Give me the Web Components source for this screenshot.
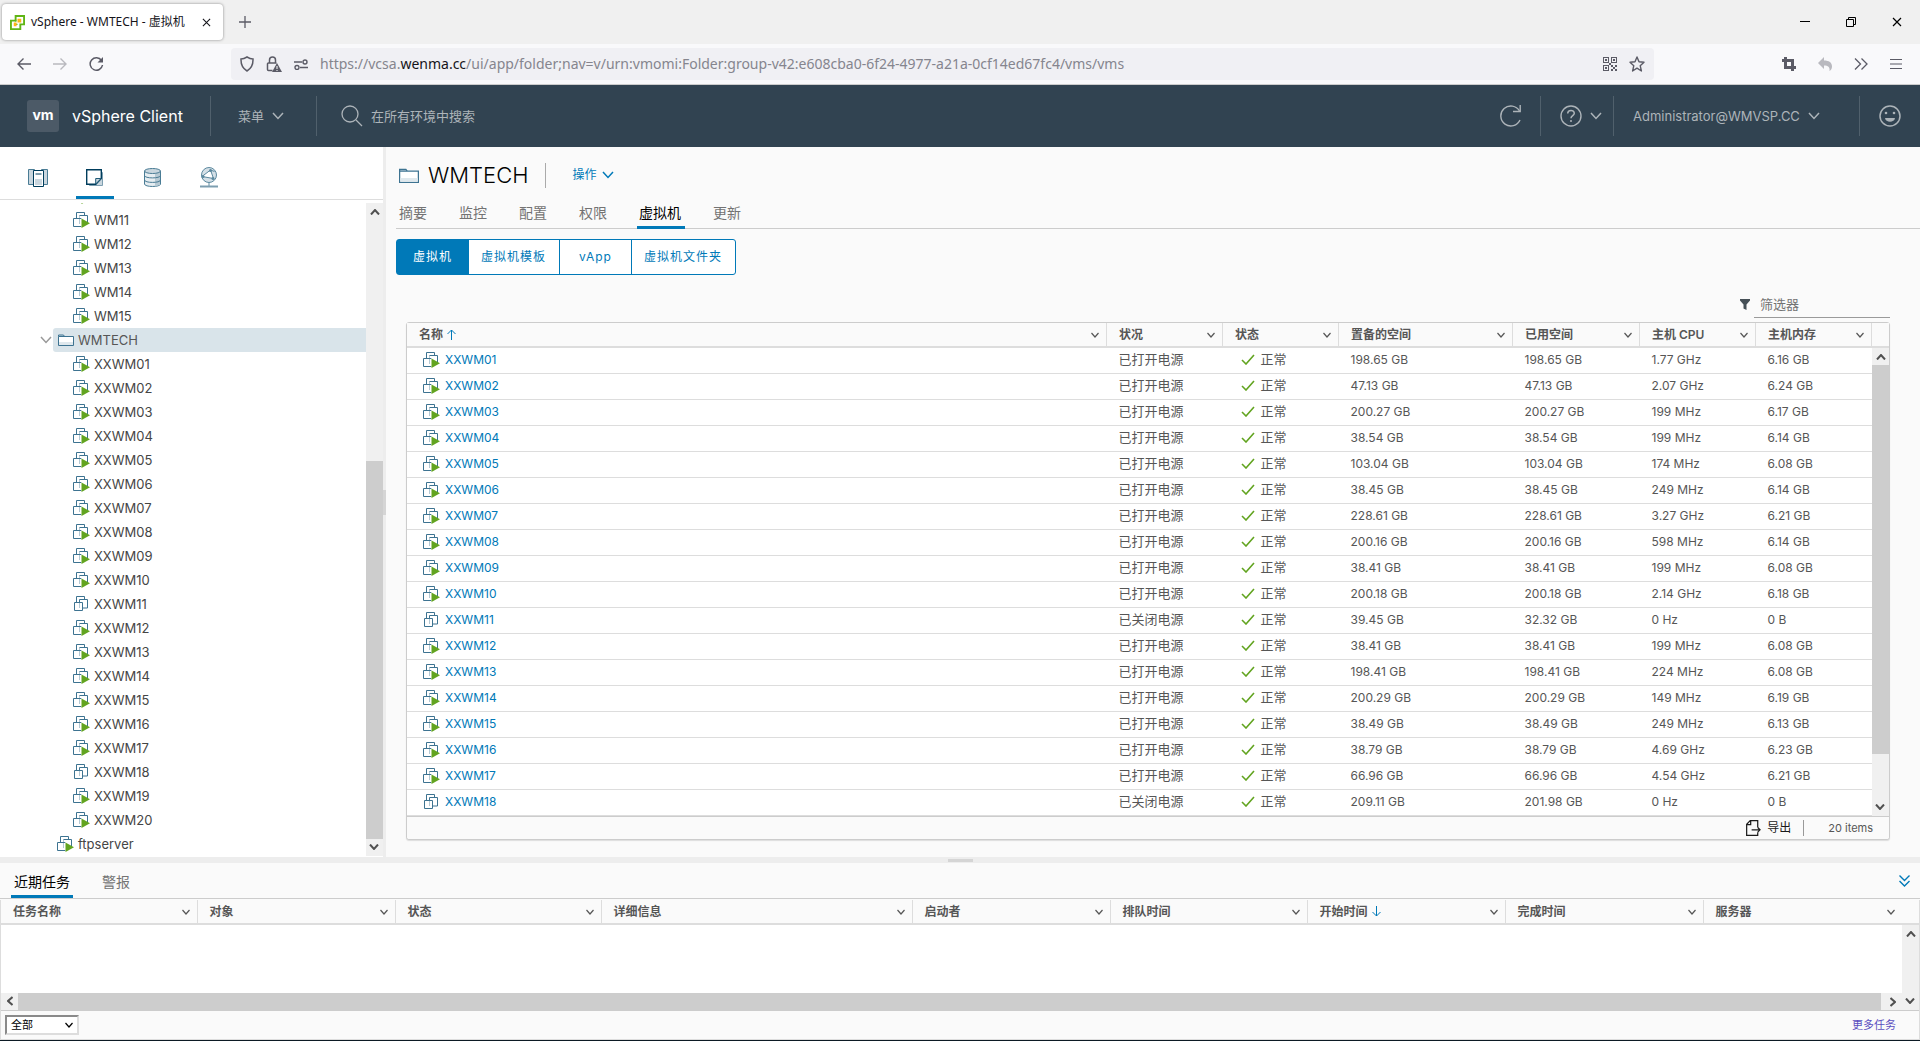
<!DOCTYPE html>
<html lang="zh-CN">
<head>
<meta charset="utf-8">
<title>vSphere - WMTECH - 虚拟机</title>
<style>
  html, body {
    height: 100%;
    margin: 0;
  }
  body {
    display: flex;
    flex-direction: column;
    overflow: hidden;
    background: #fafafa;
    color: #565656;
    font: 12px/24px Inter, "Noto Sans CJK SC", sans-serif;
    --blue: #0079b8;
    --line: #ddd;
    --header: #314351;
  }
</style>
</head>
<body>
  <browser-chrome></browser-chrome>
  <app-header></app-header>
  <app-workspace>
    <nav-tree slot="nav"></nav-tree>
    <vm-view></vm-view>
    <task-panel slot="tasks"></task-panel>
  </app-workspace>

<script>
/*
 * Base class: clones the element's template into an open shadow root
 */
class BaseElement extends HTMLElement {
  constructor() {
    super();
    this.attachShadow({ mode: "open" });
    let t = document.createElement("template");
    t.innerHTML = BaseElement.reset + this.template;
    this.shadowRoot.append(t.content.cloneNode(true));
  }
}

BaseElement.reset = `
  <style>
    *, :host { box-sizing: border-box; }
    button, input, select { font: inherit; color: inherit; background: none; border: 0; margin: 0; padding: 0; }
    button { display: inline-flex; align-items: center; text-align: left; white-space: nowrap; }
    a { color: inherit; text-decoration: none; }
    ul { list-style: none; margin: 0; padding: 0; }
    table { border-collapse: collapse; table-layout: fixed; width: 100%; }
  </style>
`;

/*
 * Icons: [width, height, markup]
 */
const ICONS = {
  chevron: [12, 8, `<path d="M1 1l5 5.500 5-5.500" fill="none" stroke="currentColor" stroke-width="1.500"/>`],
  caret: [8, 6, `<path d="M.5 1l3.500 4 3.500-4" fill="none" stroke="currentColor" stroke-width="1.200"/>`],
  arrow: [10, 6, `<path d="M1 5.500l4-4.500 4 4.500" fill="none" stroke="#505050" stroke-width="2"/>`],
  brand: [16, 16, `<path d="M6 1h9v9h-4v5H1V6h5z" fill="#fff" stroke="#60b515" stroke-width="2"/><path d="M6 5v5h5" fill="none" stroke="#60b515" stroke-width="1.500" stroke-dasharray="2 3"/><path d="M8 4h4v4H8zM4 8h3v4H4z" fill="#fdb515"/>`],
  close: [10, 10, `<path d="M1 1l8 8M9 1L1 9" stroke="currentColor" stroke-width="1.200"/>`],
  plus: [12, 12, `<path d="M6 0v12M0 6h12" stroke="currentColor" stroke-width="1.300"/>`],
  back: [14, 12, `<path d="M14 6H1M6.500.5L1 6l5.500 5.500" fill="none" stroke="currentColor" stroke-width="1.400"/>`],
  forward: [14, 12, `<path d="M0 6h13M7.500.5L13 6l-5.500 5.500" fill="none" stroke="currentColor" stroke-width="1.400"/>`],
  reload: [15, 14, `<path d="M12.500 3.500A6.200 6.200 0 1 0 13.500 8" fill="none" stroke="currentColor" stroke-width="1.500"/><path d="M14 0v5.500H8.500z" fill="currentColor"/>`],
  shield: [14, 16, `<path d="M7 1c2 1.300 4 2 6 2 .2 5-1.500 9.500-6 12C2.500 12.500.8 8 1 3c2 0 4-.7 6-2z" fill="none" stroke="currentColor" stroke-width="1.500"/>`],
  lock: [16, 16, `<path d="M3.500 7V4a3 3 0 0 1 6 0v3M6.500 14.500H2.500a1 1 0 0 1-1-1V8a1 1 0 0 1 1-1h8" fill="none" stroke="currentColor" stroke-width="1.500"/><path d="M11 7l5 9H6z" fill="currentColor"/><path d="M11 10v3m0 1v1" stroke="#fff"/>`],
  perms: [14, 11, `<g fill="none" stroke="currentColor" stroke-width="1.400"><path d="M0 3h8M6 8.500h8"/><circle cx="11" cy="3" r="2"/><circle cx="3" cy="8.500" r="2"/></g>`],
  qr: [14, 14, `<path fill="currentColor" fill-rule="evenodd" d="M0 0h6v6H0zm1 1v4h4V1zm1 1h2v2H2zM8 0h6v6H8zm1 1v4h4V1zm1 1h2v2h-2zM0 8h6v6H0zm1 1v4h4V9zm1 1h2v2H2zM8 8h2v2H8zM10 10h2v2h-2zM12 8h2v2h-2zM12 12h2v2h-2zM8 12h2v2H8zM6 6h2v2H6z"/>`],
  star: [16, 16, `<path d="M8 1l2 4.800 5 .5-3.800 3.400L12.400 15 8 12.200 3.600 15l1.200-5.300L1 6.300l5-.5z" fill="none" stroke="currentColor" stroke-width="1.400" stroke-linejoin="round"/>`],
  crop: [14, 14, `<path d="M3.500 0v10.500H14M0 3.500h10.500V14" fill="none" stroke="currentColor" stroke-width="3"/>`],
  undo: [14, 14, `<path d="M6 0v3.500c5 0 8 2 8 6 0 2-1 3.500-2.500 4.500.6-4-1.500-5.500-5.500-5.500V12L0 6z" fill="currentColor"/>`],
  more: [14, 12, `<path d="M1 .5L6.500 6 1 11.500M7.500.5L13 6l-5.500 5.500" fill="none" stroke="currentColor" stroke-width="1.300"/>`],
  menu: [12, 10, `<path d="M0 .5h12M0 5h12M0 9.500h12" stroke="currentColor" stroke-width="1.200"/>`],
  min: [10, 10, `<path d="M0 4.500h10" stroke="currentColor"/>`],
  restore: [10, 10, `<path d="M.5 2.500h7v7h-7zM2.500 2.500v-2h7v7h-2" fill="none" stroke="currentColor"/>`],
  search: [22, 22, `<circle cx="9" cy="9" r="8" fill="none" stroke="currentColor" stroke-width="1.300"/><path d="M15 15l6 6" stroke="currentColor" stroke-width="1.300"/>`],
  refresh: [22, 22, `<path d="M20.500 6A10 10 0 1 0 21 15" fill="none" stroke="currentColor" stroke-width="1.400"/><path d="M21.200 0v6.500H14" fill="none" stroke="currentColor" stroke-width="1.400"/>`],
  help: [22, 22, `<circle cx="11" cy="11" r="10" fill="none" stroke="currentColor" stroke-width="1.400"/><path d="M7.700 8.500c0-4 6.600-4 6.600-.3 0 2.300-3.300 2.500-3.300 5M11 15v2" fill="none" stroke="currentColor" stroke-width="1.500"/>`],
  smile: [22, 22, `<circle cx="11" cy="11" r="10" fill="none" stroke="currentColor" stroke-width="1.500"/><circle cx="7" cy="8" r="1.300" fill="currentColor"/><circle cx="15" cy="8" r="1.300" fill="currentColor"/><path d="M6 13h10c-.5 5-9.500 5-10 0z" fill="currentColor"/>`],
  hosts: [20, 19, `<g stroke="#4a7c95"><path d="M.5 1.500h6v15h-6z" fill="#c9d6de"/><path d="M13.500 1.500h6v15h-6z" fill="#c9d6de"/></g><path d="M5.500 2.500h10v16h-10z" fill="#fff" stroke="#003d5c"/><path d="M7.500 6h6" stroke="#003d5c"/><path d="M7 11h7v6H7z" fill="#c9d6de"/>`],
  vms: [18, 18, `<path d="M3.500 3.500h13v13h-13z" fill="#c9d6de" stroke="#7d9eb0"/><path d="M.7.7h14.600v8.800l-5.500 5.800H.7z" fill="#fff" stroke="#003d5c" stroke-width="1.400"/><path d="M15 9.500H9.700V15z" fill="#c9d6de" stroke="#1f5b78"/>`],
  storage: [17, 19, `<g stroke="#4a7c95"><path d="M.5 3v13c0 3.300 16 3.300 16 0V3" fill="#e6edf1"/><path d="M11 4h5v13l-5 1z" fill="#b7c9d3" stroke="none"/><ellipse cx="8.500" cy="3" rx="8" ry="2.500" fill="#c9d6de"/><path d="M.5 7.500c0 3.200 16 3.200 16 0M.5 12c0 3.200 16 3.200 16 0" fill="none"/></g>`],
  network: [18, 21, `<g stroke="#5c899f" fill="none"><circle cx="9" cy="8" r="7.500" fill="#d5e0e7"/><path d="M2 9.500L10.500 3l3 8.500M2 9.500l11.500 2M10.500 3l4 1.500" fill="#fff"/><path d="M9 15.500V19" /><path d="M0 19.500h18" stroke="#7d9eb0" stroke-width="2"/></g><g fill="#5c899f"><circle cx="10.500" cy="3.500" r="1.500"/><circle cx="3" cy="9.500" r="1.500"/><circle cx="13" cy="11.500" r="1.500"/></g>`],
  folder: [16, 12, `<path d="M.5 2.500V1h5l1 1.500" fill="#cbdbe3" stroke="#3d7391"/><path d="M.5 2.500h15v9H.5z" fill="#fff" stroke="#3d7391"/><path d="M1 8h14v3H1z" fill="#dfe8ed"/>`],
  vmOn: [17, 16, `<g fill="#fff" stroke="#3d7391"><path d="M3.500 8V.5h8V8"/><path d="M6.500 11V3.500h8V11"/><path d="M8 14.500H.5v-8H8z"/></g><path d="M7 7h2.500v7H7z" fill="#fff"/><path d="M6.500 6V3.500M6.500 7v5" stroke="#b3c8d3"/><path d="M8.500 6.500V16l8.500-4.700z" fill="#62a420"/>`],
  vmOff: [17, 16, `<g fill="#fff" stroke="#3d7391"><path d="M3.500 8V.5h8V8z"/><path d="M6.500 3.500h8v8.500h-8z"/><path d="M1.500 6.500h8v8h-8z"/></g><path d="M6.500 7v5" stroke="#b3c8d3"/>`],
  up: [9, 11, `<path d="M4.500 11V1M.5 5l4-4 4 4" fill="none" stroke="#0079b8"/>`],
  down: [9, 11, `<path d="M4.500 0v10M.5 6l4 4 4-4" fill="none" stroke="#0079b8"/>`],
  check: [14, 11, `<path d="M1 6l4 4 8-9" fill="none" stroke="#62a420" stroke-width="1.600"/>`],
  filter: [10, 11, `<path d="M0 0h10v1.500L6.500 5.500V11l-3-1.500v-4L0 1.500z" fill="#454f56"/>`],
  export: [16, 17, `<path d="M12.500 8V.7H4.500L.7 4.500v11.800h11.800V13M5 1v4H1" fill="none" stroke="#1b1b1b" stroke-width="1.300"/><path d="M6 10.500h9M12.500 8l2.500 2.500-2.500 2.500" fill="none" stroke="#1b1b1b" stroke-width="1.300"/>`],
  collapse: [11, 12, `<path d="M.5.5l5 5 5-5M.5 6l5 5 5-5" fill="none" stroke="#0079b8" stroke-width="1.400"/>`]
};

class VsIcon extends BaseElement {
  get template() {
    let [w, h, body] = ICONS[this.getAttribute("name")];
    return `
    <style>
      :host { display: inline-flex; flex: none; }
      svg { display: block; width: var(--icon-width, ${w}px); height: auto; }
    </style>
    <svg viewBox="0 0 ${w} ${h}" aria-hidden="true">${body}</svg>
    `;
  }
}

const icon = (name) => `<vs-icon name="${name}"></vs-icon>`;

// Scroll bar. "parts" holds the share of the track before, in and after the thumb.
class ScrollBar extends BaseElement {
  get template() {
    let [before, thumb, after] = this.getAttribute("parts").split(" ");
    return `
    <style>
      :host { display: flex; flex-direction: column; flex: none; width: 17px; background: #f0f0f0; }
      :host([horizontal]) { flex-direction: row; width: auto; height: 17px; }
      .end { flex: none; display: flex; align-items: center; justify-content: center; width: 17px; height: 17px; }
      .last { transform: rotate(180deg); }
      :host([horizontal]) .end { transform: rotate(-90deg); }
      :host([horizontal]) .last { transform: rotate(90deg); }
      .thumb { background: #cdcdcd; }
    </style>
    <span class="end">${icon("arrow")}</span>
    <span style="flex: ${before}"></span>
    <span class="thumb" style="flex: ${thumb}"></span>
    <span style="flex: ${after}"></span>
    <span class="end last">${icon("arrow")}</span>
    `;
  }
}

class BrowserChrome extends BaseElement {
  get template() {
    return `
    <style>
      :host { display: block; flex: none; font: 14px/20px "Noto Sans", "Noto Sans CJK SC", sans-serif; color: #5b5b66; border-bottom: 1px solid #ccc; }
      .strip { display: flex; align-items: center; height: 44px; padding: 0 18px 0 2px; background: #f0f0f0; color: #15141a; }
      .tab { display: flex; align-items: center; gap: 6px; width: 221px; height: 36px; padding: 0 12px 0 8px; border-radius: 4px; background: #fff; box-shadow: 0 0 3px #888; font-size: 12px; white-space: nowrap; }
      .tab vs-icon { --icon-width: 15px; }
      .tab button { margin-left: auto; }
      .tab button vs-icon { --icon-width: 9px; }
      .strip > button { margin-left: 16px; color: #5b5b66; }
      .window { display: flex; gap: 36px; margin-left: auto; color: #000; }
      .bar { display: flex; align-items: center; height: 40px; padding: 0 18px 0 17px; background: #f9f9fb; }
      .nav { display: flex; gap: 22px; width: 214px; }
      .faded { opacity: .4; }
      .url { display: flex; flex: 1; align-items: center; gap: 12px; height: 32px; padding: 0 9px; border-radius: 4px; background: #f0f0f4; }
      .address { flex: 1; color: #85858e; white-space: nowrap; }
      .address b { font-weight: 400; color: #15141a; }
      .tools { display: flex; align-items: center; gap: 22px; margin-left: 128px; }
    </style>
    <div class="strip">
      <div class="tab">${icon("brand")}<span>vSphere - WMTECH - 虚拟机</span><button aria-label="关闭标签页">${icon("close")}</button></div>
      <button aria-label="新标签页">${icon("plus")}</button>
      <div class="window">
        <button aria-label="最小化">${icon("min")}</button>
        <button aria-label="还原">${icon("restore")}</button>
        <button aria-label="关闭">${icon("close")}</button>
      </div>
    </div>
    <div class="bar">
      <div class="nav">
        <button aria-label="后退">${icon("back")}</button>
        <button class="faded" aria-label="前进">${icon("forward")}</button>
        <button aria-label="刷新">${icon("reload")}</button>
      </div>
      <div class="url">
        ${icon("shield")}${icon("lock")}${icon("perms")}
        <div class="address" role="textbox" aria-label="地址" contenteditable="true" spellcheck="false">https://vcsa.<b>wenma.cc</b>/ui/app/folder;nav=v/urn:vmomi:Folder:group-v42:e608cba0-6f24-4977-a21a-0cf14ed67fc4/vms/vms</div>
        <button aria-label="二维码">${icon("qr")}</button>
        <button aria-label="收藏">${icon("star")}</button>
      </div>
      <div class="tools">
        <button aria-label="截图">${icon("crop")}</button>
        <button class="faded" aria-label="撤销">${icon("undo")}</button>
        <button aria-label="更多工具">${icon("more")}</button>
        <button aria-label="菜单">${icon("menu")}</button>
      </div>
    </div>
    `;
  }
}

class AppHeader extends BaseElement {
  get template() {
    return `
    <style>
      :host { display: flex; flex: none; align-items: center; height: 62px; padding: 0 19px 0 27px; background: var(--header); color: #adb4b9; font-size: 13px; }
      .logo { width: 32px; height: 32px; border-radius: 3px; background: #4c5a67; color: #fff; font: 700 14px/30px Inter, sans-serif; text-align: center; }
      .brand { display: flex; align-items: center; gap: 13px; width: 183px; }
      .name { color: #fff; font-size: 16px; }
      .section { display: flex; align-items: center; height: 40px; border-left: 1px solid #50606c; }
      button { gap: 8px; }
      .menu { width: 106px; padding-left: 27px; }
      .search { flex: 1; gap: 8px; padding-left: 24px; }
      input { flex: 1; outline: 0; }
      input::placeholder { color: #adb4b9; opacity: 1; }
      .refresh { margin-right: 19px; }
      .help { width: 73px; padding-left: 19px; }
      .user { width: 246px; padding-left: 19px; }
      .face { padding-left: 19px; }
    </style>
    <div class="brand"><span class="logo">vm</span><span class="name">vSphere Client</span></div>
    <div class="section menu"><button>菜单${icon("chevron")}</button></div>
    <label class="section search">${icon("search")}<input type="text" placeholder="在所有环境中搜索" aria-label="在所有环境中搜索"></label>
    <button class="refresh" aria-label="刷新">${icon("refresh")}</button>
    <div class="section help"><button aria-label="帮助">${icon("help")}${icon("chevron")}</button></div>
    <div class="section user"><button>Administrator@WMVSP.CC${icon("chevron")}</button></div>
    <div class="section face"><button aria-label="反馈">${icon("smile")}</button></div>
    `;
  }
}

// Three panes: navigator, main view and tasks, with splitters between them
class AppWorkspace extends BaseElement {
  get template() {
    return `
    <style>
      :host { display: flex; flex: 1; flex-direction: column; min-height: 0; }
      .top { display: flex; flex: 1; min-height: 0; }
      .split { flex: none; display: flex; align-items: center; justify-content: center; background: #ededed; }
      .vertical { width: 3px; }
      .horizontal { height: 6px; }
      .grip { background: #d5d5d5; }
      .vertical .grip { width: 3px; height: 25px; }
      .horizontal .grip { width: 25px; height: 3px; }
    </style>
    <div class="top">
      <slot name="nav"></slot>
      <div class="split vertical"><span class="grip"></span></div>
      <slot></slot>
    </div>
    <div class="split horizontal"><span class="grip"></span></div>
    <slot name="tasks"></slot>
    `;
  }
}

class NavTree extends BaseElement {
  get template() {
    let range = (prefix, from, to) => Array.from({ length: to - from + 1 },
      (_, i) => prefix + String(from + i).padStart(2, "0"));
    let vm = (name) => `<li class="vm">${icon(OFF.includes(name) ? "vmOff" : "vmOn")}<span>${name}</span></li>`;
    return `
    <style>
      :host { display: flex; flex: none; flex-direction: column; width: 383px; background: #fff; color: #454545; font-size: 13px; }
      nav { display: flex; flex: none; height: 53px; padding-left: 19px; gap: 19px; border-bottom: 1px solid var(--line); }
      nav button { justify-content: center; width: 38px; height: 52px; padding-top: 12px; border-bottom: 3px solid transparent; }
      nav .active { border-color: var(--blue); }
      .body { display: flex; flex: 1; min-height: 0; padding: 3px 0 1px; }
      ul { display: flex; flex: 1; flex-direction: column; justify-content: flex-end; overflow: hidden; }
      li { display: flex; flex: none; align-items: center; height: 24px; gap: 4px; padding-left: 57px; }
      li.vm { padding-left: 73px; }
      li.selected { padding-left: 40px; color: #565656; }
      .selected > vs-icon { color: #999; }
      .node { display: flex; flex: 1; align-items: center; gap: 4px; height: 24px; padding-left: 5px; margin-left: -3px; border-radius: 3px 0 0 3px; background: #d9e4ea; }
    </style>
    <nav>
      <button aria-label="主机和集群">${icon("hosts")}</button>
      <button class="active" aria-label="虚拟机和模板">${icon("vms")}</button>
      <button aria-label="存储">${icon("storage")}</button>
      <button aria-label="网络">${icon("network")}</button>
    </nav>
    <div class="body">
      <ul>
        <li class="vm">${icon("vmOn")}</li>
        ${range("WM", 11, 15).map(vm).join("")}
        <li class="selected">${icon("chevron")}<span class="node">${icon("folder")}WMTECH</span></li>
        ${range("XXWM", 1, 20).map(vm).join("")}
        <li>${icon("vmOn")}<span>ftpserver</span></li>
      </ul>
      <scroll-bar parts="241 378 0"></scroll-bar>
    </div>
    `;
  }
}

// Powered-off machines
const OFF = ["XXWM11", "XXWM18"];

// Provisioned, used, CPU and memory of XXWM01 onwards
const USAGE = [
  ["198.65 GB", "198.65 GB", "1.77 GHz", "6.16 GB"],
  ["47.13 GB", "47.13 GB", "2.07 GHz", "6.24 GB"],
  ["200.27 GB", "200.27 GB", "199 MHz", "6.17 GB"],
  ["38.54 GB", "38.54 GB", "199 MHz", "6.14 GB"],
  ["103.04 GB", "103.04 GB", "174 MHz", "6.08 GB"],
  ["38.45 GB", "38.45 GB", "249 MHz", "6.14 GB"],
  ["228.61 GB", "228.61 GB", "3.27 GHz", "6.21 GB"],
  ["200.16 GB", "200.16 GB", "598 MHz", "6.14 GB"],
  ["38.41 GB", "38.41 GB", "199 MHz", "6.08 GB"],
  ["200.18 GB", "200.18 GB", "2.14 GHz", "6.18 GB"],
  ["39.45 GB", "32.32 GB", "0 Hz", "0 B"],
  ["38.41 GB", "38.41 GB", "199 MHz", "6.08 GB"],
  ["198.41 GB", "198.41 GB", "224 MHz", "6.08 GB"],
  ["200.29 GB", "200.29 GB", "149 MHz", "6.19 GB"],
  ["38.49 GB", "38.49 GB", "249 MHz", "6.13 GB"],
  ["38.79 GB", "38.79 GB", "4.69 GHz", "6.23 GB"],
  ["66.96 GB", "66.96 GB", "4.54 GHz", "6.21 GB"],
  ["209.11 GB", "201.98 GB", "0 Hz", "0 B"]
];

// Header row shared by both tables. Columns are [label, width, sort icon].
const HEAD_STYLE = `
  th { height: 24px; padding: 0; background: #fafafa; border-right: 1px solid var(--line); border-bottom: 2px solid var(--line); }
  th div { display: flex; align-items: center; justify-content: space-between; padding: 0 7px 0 12px; }
  th button { gap: 4px; font-weight: 600; line-height: 22px; }
`;

const head = (columns) => `
  <colgroup>${columns.map(([, width]) => `<col${width ? ` style="width: ${width}px"` : ""}>`).join("")}</colgroup>
  <thead><tr>${columns.map(([label, , sort]) => `
    <th scope="col"><div><button>${label}${sort ? icon(sort) : ""}</button><button aria-label="${label}选项">${icon("caret")}</button></div></th>`).join("")}
  </tr></thead>
`;

class VmGrid extends BaseElement {
  get template() {
    let columns = [["名称", 0, "up"], ["状况", 116], ["状态", 116], ["置备的空间", 174], ["已用空间", 127], ["主机 CPU", 116], ["主机内存", 116]];
    let rows = USAGE.map((usage, i) => {
      let name = "XXWM" + String(i + 1).padStart(2, "0");
      let off = OFF.includes(name);
      return `<tr>
        <td class="name"><a href="#${name}">${icon(off ? "vmOff" : "vmOn")}${name}</a></td>
        <td class="text">${off ? "已关闭电源" : "已打开电源"}</td>
        <td class="text"><span class="ok">${icon("check")}正常</span></td>
        ${usage.map((value) => `<td>${value}</td>`).join("")}
      </tr>`;
    });
    return `
    <style>
      :host { display: flex; flex: 1; flex-direction: column; min-height: 0; border: 1px solid #ccc; border-radius: 3px; box-shadow: 0 1px 1px #ddd; background: #fff; }
      ${HEAD_STYLE}
      .body { display: flex; flex: 1; min-height: 0; overflow: hidden; }
      .rows { flex: 1; min-width: 0; }
      .side { display: flex; flex-direction: column; width: 17px; }
      .cap { height: 25px; flex: none; background: #fafafa; border-bottom: 2px solid var(--line); }
      scroll-bar { flex: 1; }
      td { padding: 0 0 0 12px; border-bottom: 1px solid var(--line); line-height: 22px; white-space: nowrap; }
      tbody tr { height: 26px; }
      .name { padding-left: 16px; color: var(--blue); }
      .name a { display: flex; align-items: center; gap: 5px; }
      .text { padding-bottom: 2px; font-size: 13px; }
      .ok { display: flex; align-items: center; gap: 6px; padding-left: 6px; }
      footer { display: flex; flex: none; align-items: center; justify-content: flex-end; height: 23px; padding-right: 16px; border-top: 1px solid #ccc; border-radius: 0 0 3px 3px; background: #fafafa; font-size: 11px; }
      footer button { gap: 6px; padding-right: 12px; margin-right: 24px; border-right: 1px solid #999; line-height: 16px; font-size: 12px; color: #1b1b1b; }
      footer vs-icon { --icon-width: 15px; }
    </style>
    <div class="body">
      <div class="rows"><table>${head(columns)}<tbody>${rows.join("")}</tbody></table></div>
      <div class="side"><div class="cap"></div><scroll-bar parts="0 389 45"></scroll-bar></div>
    </div>
    <footer><button>${icon("export")}导出</button><span>20 items</span></footer>
    `;
  }
}

class VmView extends BaseElement {
  get template() {
    return `
    <style>
      :host { display: flex; flex: 1; flex-direction: column; min-width: 0; padding: 15px 0 17px 10px; }
      header { display: flex; flex: none; align-items: center; height: 26px; padding-left: 3px; }
      header > vs-icon { --icon-width: 20px; }
      h1 { margin: 0 0 0 9px; padding-right: 17px; border-right: 1px solid #aaa; color: #000; font-size: 22px; font-weight: 300; line-height: 25px; }
      .actions { gap: 6px; margin-left: 26px; color: var(--blue); }
      nav { display: flex; flex: none; height: 41px; gap: 30px; padding-left: 3px; border-bottom: 1px solid #ccc; font-size: 14px; color: #737373; }
      nav a { display: flex; align-items: flex-end; height: 41px; padding: 0 2px 1px 0; border-bottom: 3px solid transparent; line-height: 24px; }
      nav a.active { color: #000; border-color: var(--blue); padding: 0 4px 1px 2px; margin: 0 -2px; }
      .kinds { display: flex; align-self: flex-start; margin-top: 10px; border: 1px solid var(--blue); border-radius: 3px; color: var(--blue); background: #fff; }
      .kinds button { justify-content: center; height: 34px; padding: 0 13px 0 12px; border-left: 1px solid var(--blue); letter-spacing: 1px; }
      .kinds button:first-child { border-left: 0; padding: 0 16px; background: var(--blue); color: #fff; }
      .kinds .app { padding: 0 19px; }
      .filter { display: flex; flex: none; align-self: flex-end; align-items: center; gap: 4px; height: 28px; margin: 15px 30px 4px 0; }
      .filter input { width: 136px; height: 28px; padding: 0 6px; border-bottom: 1px solid #9a9a9a; font-size: 13px; outline: 0; }
      .filter input::placeholder { color: #737373; opacity: 1; }
      vm-grid { margin: 0 30px 0 10px; }
    </style>
    <header>${icon("folder")}<h1>WMTECH</h1><button class="actions">操作${icon("chevron")}</button></header>
    <nav><a href="#summary">摘要</a><a href="#monitor">监控</a><a href="#configure">配置</a><a href="#permissions">权限</a><a class="active" href="#vms">虚拟机</a><a href="#updates">更新</a></nav>
    <div class="kinds"><button>虚拟机</button><button>虚拟机模板</button><button class="app">vApp</button><button>虚拟机文件夹</button></div>
    <label class="filter">${icon("filter")}<input type="text" placeholder="筛选器" aria-label="筛选器"></label>
    <vm-grid></vm-grid>
    `;
  }
}

class TaskPanel extends BaseElement {
  get template() {
    let columns = [["任务名称", 196], ["对象", 198], ["状态", 206], ["详细信息", 311], ["启动者", 198], ["排队时间", 197], ["开始时间", 198, "down"], ["完成时间", 198], ["服务器", 0]];
    return `
    <style>
      :host { display: block; flex: none; border-bottom: 1px solid #0c1a24; }
      ${HEAD_STYLE}
      th:last-child { border-right: 0; }
      th:last-child div { padding-right: 24px; }
      .tabs { display: flex; align-items: center; height: 36px; padding: 0 10px 0 11px; border-bottom: 1px solid #ccc; font-size: 14px; color: #737373; }
      .tabs a { height: 35px; padding: 6px 3px 0; border-bottom: 3px solid transparent; line-height: 26px; }
      .tabs .active { margin-right: 26px; border-color: var(--blue); color: #000; }
      .tabs button { margin-left: auto; }
      .frame { margin-top: 1px; border: 1px solid var(--line); border-top: 0; background: #fff; }
      .area { display: flex; height: 85px; }
      .left { display: flex; flex: 1; flex-direction: column; justify-content: flex-end; }
      footer { display: flex; align-items: center; justify-content: space-between; height: 29px; padding: 0 23px 0 4px; border-top: 1px solid #ccc; background: #fafafa; font-size: 11px; }
      .pick { display: grid; align-items: center; color: #000; }
      .pick > * { grid-area: 1 / 1; }
      .pick vs-icon { justify-self: end; margin-right: 6px; pointer-events: none; }
      select { appearance: none; width: 74px; height: 20px; padding: 0 4px; border: 2px solid; border-color: #8a8a8a #ddd #ddd #8a8a8a; background: #fff; line-height: 16px; }
      footer a { color: #5b4fc0; }
    </style>
    <div class="tabs"><a class="active" href="#tasks">近期任务</a><a href="#alarms">警报</a><button aria-label="收起">${icon("collapse")}</button></div>
    <div class="frame">
      <table>${head(columns)}</table>
      <div class="area">
        <div class="left"><scroll-bar horizontal parts="0 1862 4"></scroll-bar></div>
        <scroll-bar parts="0 0 1"></scroll-bar>
      </div>
      <footer>
        <label class="pick"><select aria-label="任务筛选"><option>全部</option></select>${icon("caret")}</label>
        <a href="#more">更多任务</a>
      </footer>
    </div>
    `;
  }
}

// Define the elements, leaves first
customElements.define("vs-icon", VsIcon);
customElements.define("scroll-bar", ScrollBar);
customElements.define("browser-chrome", BrowserChrome);
customElements.define("app-header", AppHeader);
customElements.define("nav-tree", NavTree);
customElements.define("vm-grid", VmGrid);
customElements.define("vm-view", VmView);
customElements.define("task-panel", TaskPanel);
customElements.define("app-workspace", AppWorkspace);
</script>
</body>
</html>
